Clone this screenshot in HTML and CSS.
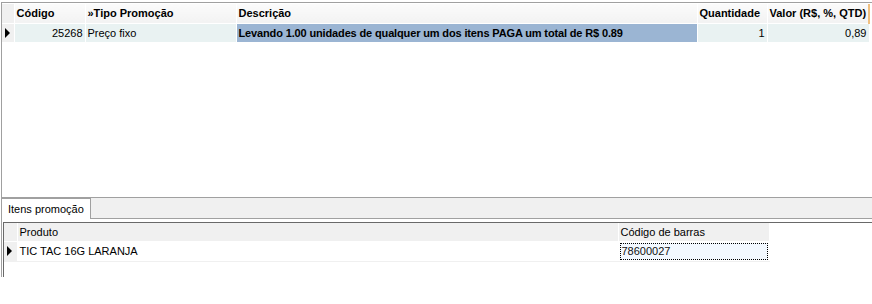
FILE: index.html
```html
<!DOCTYPE html>
<html lang="pt">
<head>
    <meta charset="UTF-8">
    <title>Promoções</title>
    <link rel="stylesheet" href="styles.css">
</head>
<body>
    <div class="promo-grid">
        <table class="grid main">
            <colgroup>
                <col class="c-ind">
                <col class="c-cod">
                <col class="c-tipo">
                <col class="c-desc">
                <col class="c-qtd">
                <col class="c-valor">
                <col class="c-rest">
            </colgroup>
            <tr class="head">
                <th class="ind"></th>
                <th>Código</th>
                <th>»Tipo Promoção</th>
                <th>Descrição</th>
                <th>Quantidade</th>
                <th>Valor (R$, %, QTD)</th>
                <th class="rest"></th>
            </tr>
            <tr class="row current">
                <td class="ind"><span class="arrow"></span></td>
                <td class="num">25268</td>
                <td>Preço fixo</td>
                <td class="sel">Levando 1.00 unidades de qualquer um dos itens PAGA um total de R$ 0.89</td>
                <td class="num">1</td>
                <td class="num">0,89</td>
                <td class="rest"></td>
            </tr>
        </table>
    </div>

    <div class="tabs">
        <div class="tab-strip">
            <div class="tab active">Itens promoção</div>
        </div>
        <div class="tab-page">
            <div class="items-box">
                <table class="grid items">
                    <colgroup>
                        <col class="i-ind">
                        <col class="i-prod">
                        <col class="i-bar">
                        <col>
                    </colgroup>
                    <tr class="head">
                        <th class="ind"></th>
                        <th>Produto</th>
                        <th>Código de barras</th>
                        <th class="blank"></th>
                    </tr>
                    <tr class="row">
                        <td class="ind"><span class="arrow"></span></td>
                        <td>TIC TAC 16G LARANJA</td>
                        <td class="focus"><span>78600027</span></td>
                        <td class="blank"></td>
                    </tr>
                </table>
            </div>
        </div>
    </div>
</body>
</html>
```

FILE: styles.css
```css
* {
    box-sizing: border-box;
    margin: 0;
    padding: 0;
}

body {
    width: 872px;
    height: 304px;
    background: #fff;
    font-family: 'Liberation Sans', Arial, sans-serif;
    font-size: 11px;
    color: #000;
    overflow: hidden;
}

.promo-grid {
    height: 196px;
    margin-top: 2px;
    margin-left: 1px;
    border-top: 1px solid #a0a0a0;
    border-left: 1px solid #a0a0a0;
    border-bottom: 1px solid #a0a0a0;
    padding-top: 1px;
}

.grid {
    border-collapse: collapse;
    table-layout: fixed;
}

.grid.main {
    width: 871px;
}

.c-ind { width: 12px; }
.c-cod { width: 71px; }
.c-tipo { width: 151px; }
.c-desc { width: 461px; }
.c-qtd { width: 70px; }
.c-valor { width: 102px; }

.grid th,
.grid td {
    white-space: nowrap;
    overflow: hidden;
    text-align: left;
    padding: 0 2px;
}

.main th {
    height: 19px;
    font-weight: bold;
    background: linear-gradient(#fbfbfb, #f2f2f2);
    border-right: 1px solid #fff;
    border-bottom: 1px solid #fff;
}

.main td {
    height: 19px;
    font-weight: normal;
    background: #e9f2f2;
    border-right: 1px solid #fff;
}

.main th.rest {
    background: #fff;
    border-left: 2px solid #f0c080;
}

.main td.rest {
    background: #fff;
}

.grid .ind {
    background: #f0f0f0;
    padding: 0;
    border-right: 1px solid #fff;
}

.main td.ind {
    background: #f0f0f0;
}

.main td.sel {
    background: #9bb5d3;
    font-weight: bold;
    letter-spacing: -0.14px;
}

.grid td.num {
    text-align: right;
}

.arrow {
    display: block;
    width: 0;
    height: 0;
    margin-left: 3px;
    border-top: 5px solid transparent;
    border-bottom: 5px solid transparent;
    border-left: 5px solid #000;
}

.tabs {
    margin-left: 1px;
    border-left: 1px solid #a0a0a0;
    height: 79px;
}

.tab-strip {
    height: 21px;
    background: #f0f0f0;
    border-bottom: 1px solid #a0a0a0;
    display: flex;
    align-items: flex-end;
}

.tab {
    height: 21px;
    margin-bottom: -1px;
    padding: 4px 6px 0 6px;
    background: #fff;
    border: 1px solid #a0a0a0;
    border-bottom: none;
    border-left: none;
}

.tab-page {
    padding-top: 3px;
    padding-left: 1px;
}

.items-box {
    height: 55px;
    border-top: 1px solid #696969;
    border-left: 1px solid #696969;
}

.grid.items {
    width: 867px;
}

.i-ind { width: 13px; }
.i-prod { width: 601px; }
.i-bar { width: 151px; }

.items th {
    height: 18px;
    font-weight: normal;
    background: #f0f0f0;
    border-right: 1px solid #fff;
    border-bottom: 1px solid #fff;
}

.items td {
    height: 19px;
    background: #fff;
    border-bottom: 1px solid #f0f0f0;
    border-right: 1px solid #fff;
}

.items th.blank,
.items td.blank {
    background: #fff;
    border-bottom: none;
}

.items td.ind {
    background: #f0f0f0;
}

.items td.focus {
    padding: 1px;
}

.items td.focus span {
    display: block;
    height: 17px;
    padding: 1px 1px 0 1px;
    background: #f2f8ff;
    border: 1px dotted #000;
    color: #111;
}
```
